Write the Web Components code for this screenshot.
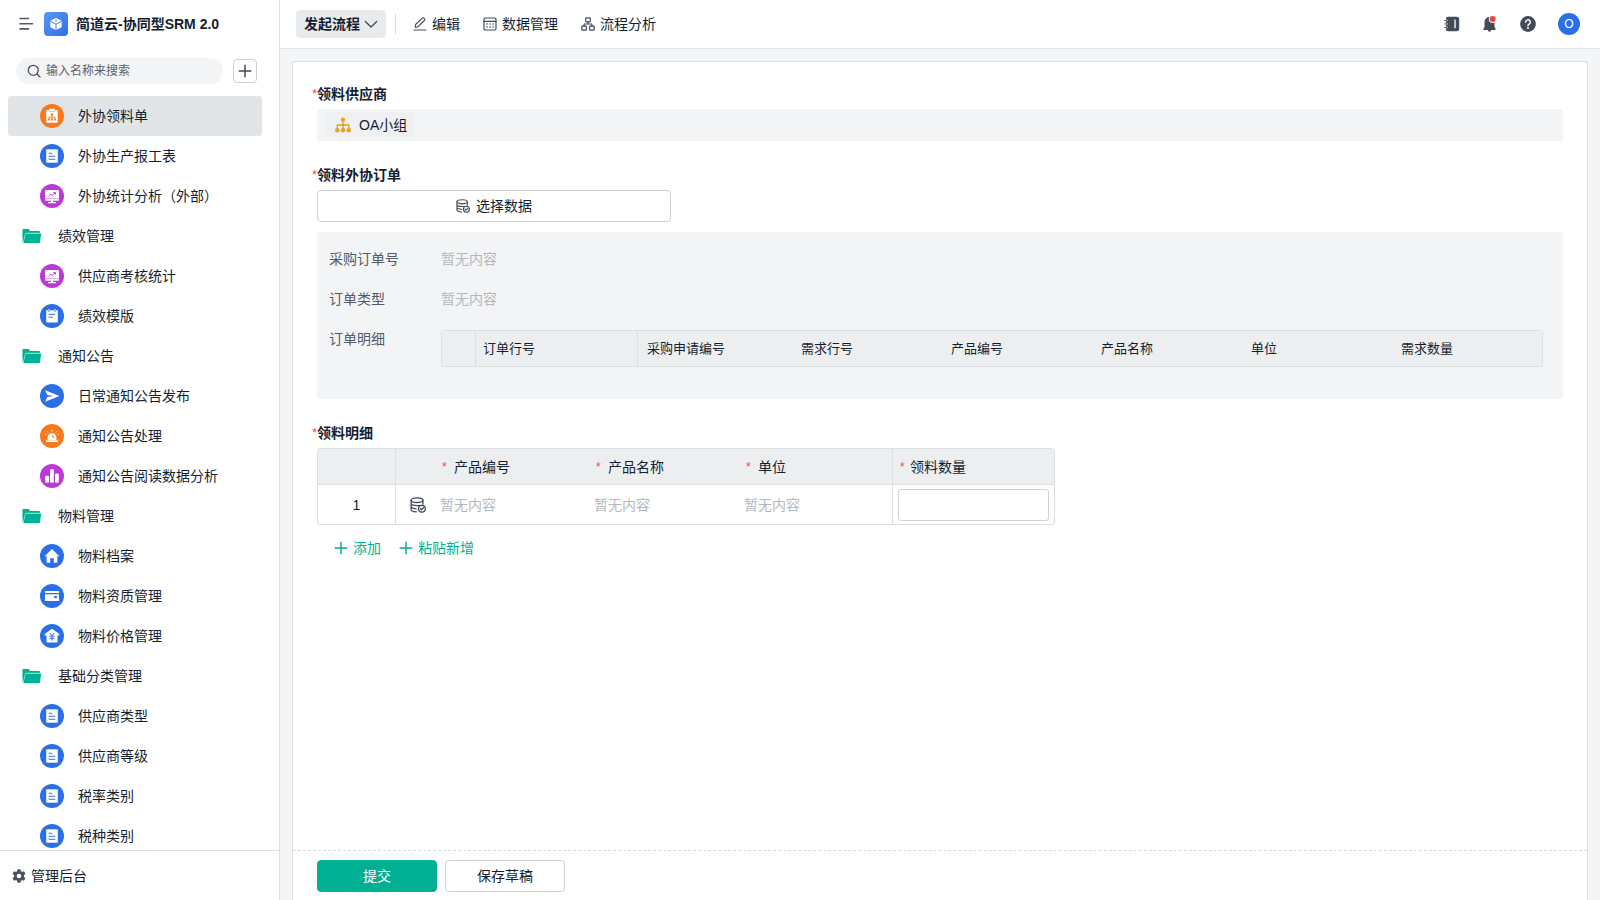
<!DOCTYPE html>
<html lang="zh-CN">
<head>
<meta charset="utf-8">
<meta name="viewport" content="width=device-width, initial-scale=1">
<title>简道云-协同型SRM 2.0</title>
<style>
:root {
  --ink: #141e31;
  --muted: #525967;
  --faint: #b4b8be;
  --line: #dcdfe2;
  --line-strong: #ced2d6;
  --page: #f3f5f6;
  --head: #eceeef;
  --brand: #00b092;
  --danger: #eb5050;
  --blue: #2a6fe8;
  --orange: #f8791c;
  --purple: #bb3ad6;
}
html, body { height: 100%; }
body {
  margin: 0;
  font: 14px/20px "Liberation Sans", "Noto Sans CJK SC", sans-serif;
  color: var(--ink);
  background: var(--page);
}
</style>
</head>
<body>
<srm-app></srm-app>

<template id="t-app">
  <style>
    :host { display: flex; height: 100vh; }
    srm-sidebar { flex: 0 0 279px; }
    .main { flex: 1; min-width: 0; display: flex; flex-direction: column; }
    srm-form { flex: 1; min-height: 0; margin: 12px 12px 0; }
  </style>
  <srm-sidebar></srm-sidebar>
  <div class="main">
    <srm-topbar></srm-topbar>
    <srm-form></srm-form>
  </div>
</template>

<template id="t-sidebar">
  <style>
    :host { display: flex; flex-direction: column; background: #fff; border-right: 1px solid var(--line); min-height: 0; }
    header { display: flex; align-items: center; height: 48px; padding: 0 16px; }
    button { font: inherit; color: inherit; cursor: pointer; padding: 0; }
    .menu { display: flex; width: 20px; height: 20px; border: 0; background: none; color: var(--muted); align-items: center; justify-content: center; }
    .logo { margin: 0 8px; }
    h1 { margin: 0; font-size: 14px; line-height: 20px; font-weight: 600; white-space: nowrap; }
    .tools { display: flex; align-items: center; gap: 10px; padding: 10px 22px 12px 16px; }
    label { flex: 1; min-width: 0; display: flex; align-items: center; gap: 5px; height: 26px; box-sizing: border-box; padding: 0 11px; border-radius: 13px; background: #f2f4f5; color: #434a58; }
    input { flex: 1; min-width: 0; border: 0; padding: 0; background: none; outline: 0; font: inherit; font-size: 12px; color: inherit; }
    input::placeholder { color: #5a606c; opacity: 1; }
    .add { display: flex; align-items: center; justify-content: center; width: 24px; height: 24px; box-sizing: border-box; border: 1px solid var(--line-strong); border-radius: 4px; background: #fff; color: #434a58; }
    nav { flex: 1; min-height: 0; overflow-y: auto; scrollbar-width: none; padding: 0 17px 0 8px; }
    footer { height: 49px; border-top: 1px solid var(--line); display: flex; align-items: center; padding-left: 12px; }
    footer a { display: flex; align-items: center; gap: 5px; color: inherit; text-decoration: none; }
    footer srm-icon { color: #4b5160; }
  </style>
  <header>
    <button class="menu" aria-label="收起菜单"><srm-icon name="menu" size="16"></srm-icon></button>
    <srm-icon class="logo" name="logo" size="24"></srm-icon>
    <h1>简道云-协同型SRM 2.0</h1>
  </header>
  <div class="tools">
    <label><srm-icon name="search" size="14"></srm-icon><input type="search" placeholder="输入名称来搜索" aria-label="输入名称来搜索"></label>
    <button class="add" aria-label="新建"><srm-icon name="plus" size="14"></srm-icon></button>
  </div>
  <nav>
    <nav-item icon="badge" tone="orange" active>外协领料单</nav-item>
    <nav-item icon="doc" tone="blue">外协生产报工表</nav-item>
    <nav-item icon="screen" tone="purple">外协统计分析（外部）</nav-item>
    <nav-item icon="folder">绩效管理</nav-item>
    <nav-item icon="screen" tone="purple">供应商考核统计</nav-item>
    <nav-item icon="note" tone="blue">绩效模版</nav-item>
    <nav-item icon="folder">通知公告</nav-item>
    <nav-item icon="send" tone="blue">日常通知公告发布</nav-item>
    <nav-item icon="alarm" tone="orange">通知公告处理</nav-item>
    <nav-item icon="bars" tone="purple">通知公告阅读数据分析</nav-item>
    <nav-item icon="folder">物料管理</nav-item>
    <nav-item icon="home" tone="blue">物料档案</nav-item>
    <nav-item icon="wallet" tone="blue">物料资质管理</nav-item>
    <nav-item icon="price" tone="blue">物料价格管理</nav-item>
    <nav-item icon="folder">基础分类管理</nav-item>
    <nav-item icon="doc" tone="blue">供应商类型</nav-item>
    <nav-item icon="doc" tone="blue">供应商等级</nav-item>
    <nav-item icon="doc" tone="blue">税率类别</nav-item>
    <nav-item icon="doc" tone="blue">税种类别</nav-item>
  </nav>
  <footer><a href="#admin"><srm-icon name="gear" size="14"></srm-icon>管理后台</a></footer>
</template>

<template id="t-nav-item">
  <style>
    :host { display: block; }
    a { display: flex; align-items: center; gap: 14px; height: 40px; padding-left: 32px; border-radius: 3px; color: inherit; text-decoration: none; white-space: nowrap; }
    .disc { display: flex; width: 24px; height: 24px; border-radius: 50%; color: #fff; }
    :host([tone=blue]) { --disc: var(--blue); }
    :host([tone=orange]) { --disc: var(--orange); }
    :host([tone=purple]) { --disc: var(--purple); }
    .disc { background: var(--disc); }
    :host([active]) a { background: #e1e5e8; }
    :host([icon=folder]) a { padding-left: 12px; }
    :host([icon=folder]) .disc { color: var(--brand); border-radius: 0; }
  </style>
  <a href="#"><span class="disc"><srm-icon size="24"></srm-icon></span><slot></slot></a>
</template>

<template id="t-topbar">
  <style>
    :host { display: flex; align-items: center; height: 48px; background: #fff; border-bottom: 1px solid #e4e7e9; padding: 0 20px 0 16px; }
    button { font: inherit; color: inherit; border: 0; background: none; padding: 0; cursor: pointer; }
    .start { display: flex; align-items: center; gap: 4px; height: 28px; padding: 0 8px; border-radius: 4px; background: #e8ebed; font-weight: 600; }
    .start srm-icon { color: #434a58; }
    .rule { width: 1px; height: 20px; background: #d5d8dc; margin: 0 17px 0 9px; }
    .tabs { display: flex; gap: 23px; flex: 1; }
    .tabs a { display: flex; align-items: center; gap: 5px; color: inherit; text-decoration: none; white-space: nowrap; }
    .tabs srm-icon, .actions { color: #434a58; }
    .actions { display: flex; align-items: center; gap: 22px; }
    .actions button { display: flex; }
    .actions .me { justify-content: center; width: 22px; height: 22px; border-radius: 50%; background: #2a6fe8; color: #fff; font-size: 12px; line-height: 22px; }
  </style>
  <button class="start">发起流程<srm-icon name="chevron" size="14"></srm-icon></button>
  <span class="rule"></span>
  <nav class="tabs">
    <a href="#edit"><srm-icon name="pencil" size="14"></srm-icon>编辑</a>
    <a href="#data"><srm-icon name="grid" size="14"></srm-icon>数据管理</a>
    <a href="#flow"><srm-icon name="flow" size="14"></srm-icon>流程分析</a>
  </nav>
  <div class="actions">
    <button aria-label="通讯录"><srm-icon name="book" size="16"></srm-icon></button>
    <button aria-label="消息"><srm-icon name="bell" size="16"></srm-icon></button>
    <button aria-label="帮助"><srm-icon name="help" size="16"></srm-icon></button>
    <button class="me">O</button>
  </div>
</template>

<template id="t-field">
  <style>
    :host { display: block; }
    h2 { position: relative; margin: 0 0 5px; font-size: 14px; line-height: 20px; font-weight: 600; }
    h2::before { content: "*"; position: absolute; right: 100%; color: var(--danger); font-size: 13px; font-weight: 400; }
  </style>
  <h2></h2>
  <slot></slot>
</template>

<template id="t-form">
  <style>
    :host { display: flex; flex-direction: column; background: #fff; border: 1px solid var(--line); border-bottom: 0; border-radius: 3px 3px 0 0; }
    .body { flex: 1; min-height: 0; overflow-y: auto; scrollbar-width: none; padding: 22px 24px; }
    form-field + form-field { margin-top: 24px; }
    button { font: inherit; color: inherit; cursor: pointer; }
    .members { display: flex; align-items: center; height: 32px; padding: 0 8px; border-radius: 2px; background: #f2f4f5; }
    .tag { display: flex; align-items: center; gap: 8px; height: 26px; padding: 0 8px 0 10px; border-radius: 3px; background: #eef0f1; }
    .tag srm-icon { color: #e5a01c; }
    .pick { display: flex; align-items: center; justify-content: center; gap: 6px; width: 354px; height: 32px; border: 1px solid var(--line-strong); border-radius: 4px; background: #fff; }
    .pick srm-icon, td srm-icon { color: #434a58; }
    dl { display: grid; grid-template-columns: 112px 1fr; row-gap: 20px; margin: 10px 0 0; padding: 17px 20px 32px 12px; border-radius: 4px; background: #f2f4f6; }
    dt { color: var(--muted); }
    dd { margin: 0; color: var(--faint); }
    table { border-collapse: separate; border-spacing: 0; table-layout: fixed; border: 1px solid var(--line); border-radius: 3px; color: var(--ink); }
    th { background: var(--head); font-weight: 400; text-align: left; white-space: nowrap; padding: 0; height: 35px; box-sizing: border-box; }
    .line { border-right: 1px solid var(--line); }
    .order { width: 100%; font-size: 13px; margin-top: 1px; }
    .order th { padding-left: 9px; }
    .order th.line { padding-left: 7px; }
    .items { width: 738px; }
    .items td { padding: 0; height: 40px; box-sizing: border-box; border-top: 1px solid var(--line); color: var(--faint); }
    .items td.no { color: var(--ink); text-align: center; }
    .items th.req::before { content: "*"; display: inline-block; width: 12px; color: var(--danger); font-size: 12px; vertical-align: top; }
    .items th.req { padding-left: 2px; }
    .items th.qty { padding-left: 7px; }
    .items th.qty::before { width: 10px; }
    td.icon srm-icon { margin: 0 auto; }
    td.edit { padding: 0 5px; }
    input { display: block; width: 100%; height: 32px; box-sizing: border-box; border: 1px solid var(--line-strong); border-radius: 3px; background: #fff; font: inherit; padding: 0 8px; }
    .more { display: flex; gap: 18px; padding: 13px 17px 0; }
    .more button { display: flex; align-items: center; gap: 5px; border: 0; padding: 0; background: none; color: var(--brand); }
    footer { display: flex; gap: 8px; height: 50px; box-sizing: border-box; border-top: 1px dashed #d8dcdf; padding: 9px 24px 0; }
    footer button { width: 120px; height: 32px; border: 1px solid var(--line-strong); border-radius: 4px; background: #fff; padding: 0; }
    footer .primary { border-color: var(--brand); background: var(--brand); color: #fff; }
  </style>
  <div class="body">
    <form-field caption="领料供应商">
      <div class="members"><span class="tag"><srm-icon name="org" size="16"></srm-icon>OA小组</span></div>
    </form-field>
    <form-field caption="领料外协订单">
      <button class="pick"><srm-icon name="database" size="14"></srm-icon>选择数据</button>
      <dl>
        <dt>采购订单号</dt><dd>暂无内容</dd>
        <dt>订单类型</dt><dd>暂无内容</dd>
        <dt>订单明细</dt>
        <dd>
          <table class="order">
            <colgroup><col style="width:34px"><col style="width:162px"><col style="width:154px"><col style="width:150px"><col style="width:150px"><col style="width:150px"><col style="width:150px"><col></colgroup>
            <thead><tr>
              <th class="line"></th><th class="line">订单行号</th><th>采购申请编号</th><th>需求行号</th><th>产品编号</th><th>产品名称</th><th>单位</th><th>需求数量</th>
            </tr></thead>
          </table>
        </dd>
      </dl>
    </form-field>
    <form-field caption="领料明细">
      <table class="items">
        <colgroup><col style="width:78px"><col style="width:44px"><col style="width:154px"><col style="width:150px"><col style="width:149px"><col></colgroup>
        <thead><tr>
          <th class="line"></th><th></th><th class="req">产品编号</th><th class="req">产品名称</th><th class="req line">单位</th><th class="req qty" id="qty">领料数量</th>
        </tr></thead>
        <tbody><tr>
          <td class="no line">1</td><td class="icon"><srm-icon name="database" size="16"></srm-icon></td><td>暂无内容</td><td>暂无内容</td><td class="line">暂无内容</td><td class="edit"><input type="text" inputmode="decimal" aria-labelledby="qty"></td>
        </tr></tbody>
      </table>
      <div class="more">
        <button><srm-icon name="plus" size="14"></srm-icon>添加</button>
        <button><srm-icon name="plus" size="14"></srm-icon>粘贴新增</button>
      </div>
    </form-field>
  </div>
  <footer><button class="primary">提交</button><button>保存草稿</button></footer>
</template>

<script>
const line = (box, body, w = 1.3) =>
  `<svg viewBox="0 0 ${box} ${box}" fill="none" stroke="currentColor" stroke-width="${w}" stroke-linecap="round" stroke-linejoin="round">${body}</svg>`;
const fill = (box, body) => `<svg viewBox="0 0 ${box} ${box}" fill="currentColor">${body}</svg>`;

/* Disc icons use a 24 unit box; cut-outs take the disc colour from --disc. */
const ICONS = {
  menu: line(16, '<path d="M2 2.500h8.500M2 7.700h12.500M2 12.900h8.500"/>', 1.6),
  logo: `<svg viewBox="0 0 24 24"><defs><linearGradient id="g" x1="0" y1="0" x2="1" y2="1"><stop offset="0" stop-color="#5c97f4"/><stop offset="1" stop-color="#2e6fe6"/></linearGradient></defs><rect width="24" height="24" rx="4" fill="url(#g)"/><path d="M12 6.500l5.200 2.500v6L12 17.700 6.800 15V9z" fill="#fff" stroke="#fff" stroke-linejoin="round"/><path d="M6.300 9.300l5.700 2.900 5.700-2.900M12 12.200v6" fill="none" stroke="#4580ec" stroke-width="1"/><circle cx="12" cy="8.900" r="1.300" fill="#a9c6fb"/></svg>`,
  search: line(14, '<circle cx="6.300" cy="6.300" r="5"/><path d="M10 10l3 3"/>', 1.3),
  plus: line(14, '<path d="M7 1.200v11.600M1.200 7h11.600"/>', 1.5),
  chevron: line(14, '<path d="M1.300 4.500L7 10l5.700-5.500"/>', 1.3),
  pencil: line(14, '<path d="M1 13h12M2.200 10.200l.4-2.700 6.800-6.300a1.200 1.200 0 0 1 1.700.1l.4.5a1.200 1.200 0 0 1-.1 1.700L4.800 9.900z"/>', 1.1),
  grid: line(14, '<rect x="1" y="1" width="12" height="12" rx="1.600"/><path d="M1 4.300h12"/><path d="M4 7h.1M7 7h.1M10 7h.1M4 10h.1M7 10h.1M10 10h.1" stroke-width="1.500"/>', 1.2),
  flow: line(14, '<rect x="4.700" y=".8" width="4.600" height="4" rx=".8"/><rect x=".8" y="9.200" width="4.600" height="4" rx=".8"/><rect x="8.600" y="9.200" width="4.600" height="4" rx=".8"/><path d="M7 4.800V7M3.100 9.200V7h7.800v2.200"/>', 1.2),
  book: `<svg viewBox="0 0 16 16" fill="currentColor"><rect x="1.800" y=".8" width="13.400" height="14.400" rx="2.200"/><rect x="10.200" y="3.600" width="1.700" height="8.600" rx=".5" fill="#d5d8dd"/><path d="M1 4.400h2.400M1 7.900h2.400M1 11.400h2.400" stroke="#fff" stroke-width="1.700"/><path d="M.3 4.400h2.700M.3 7.900h2.700M.3 11.400h2.700" stroke="currentColor" stroke-width="1"/></svg>`,
  bell: fill(16, '<path d="M7.500 1a5 5 0 0 0-5 5v5L1.500 12.600v1.400h12v-1.400l-1-1.600V6a5 5 0 0 0-5-5zM5.800 14h3.400a1.700 1.700 0 0 1-3.400 0z"/><circle cx="10.700" cy="3" r="3.900" fill="#fff"/><circle cx="10.700" cy="3" r="3" fill="#ea4545"/>'),
  help: fill(16, '<circle cx="8" cy="8" r="7.900"/><path d="M5.700 6.200a2.300 2.300 0 1 1 3.500 1.900c-.8.5-1.200.8-1.200 1.700" fill="none" stroke="#fff" stroke-width="1.500" stroke-linecap="round"/><circle cx="8" cy="12" r="1" fill="#fff"/>'),
  gear: fill(14, '<path fill-rule="evenodd" d="M5.500.3h3l.4 1.900 1.200.7 1.900-.7 1.500 2.600-1.500 1.300v1.800l1.500 1.300-1.500 2.600-1.900-.7-1.200.7-.4 1.900h-3l-.4-1.900-1.200-.7-1.900.7L.5 9.200 2 7.900V6.100L.5 4.800 2 2.200l1.900.7 1.200-.7zM7 4.700a2.300 2.300 0 1 0 0 4.600 2.300 2.300 0 0 0 0-4.600z"/>'),
  org: `<svg viewBox="0 0 16 16" fill="currentColor"><path d="M8 3v9.500M2.300 12.500V8h11.400v4.500" fill="none" stroke="currentColor" stroke-width="1.400"/><circle cx="8" cy="2.600" r="2.200"/><circle cx="2.300" cy="13.200" r="2.200"/><circle cx="8" cy="13.200" r="2.200"/><circle cx="13.700" cy="13.200" r="2.200"/></svg>`,
  database: line(16, '<ellipse cx="7" cy="3.200" rx="5.900" ry="2.300"/><path d="M1.100 3.200v9.300c0 1.300 2 2.200 5.200 2.300M12.900 3.200v4M1.100 6.300c0 1.300 2.700 2.300 5.900 2.300 1 0 1.800-.1 2.500-.3M1.100 9.500c0 1.200 2 2.100 5 2.300"/><circle cx="11.900" cy="11.700" r="3.400"/><path d="M10.400 11.700l1.100 1.100 2-2"/>', 1.3),
  folder: `<svg viewBox="0 0 24 24"><path d="M2.500 18V6.200c0-.7.500-1.200 1.200-1.200h4.600l2 2.100h8.500c.7 0 1.200.5 1.200 1.200V10z" fill="currentColor"/><path d="M5.700 9.300h15.600L19.800 19H3.200z" fill="currentColor" stroke="#9fe9dc" stroke-width="1"/><path d="M5.700 10h15.200l-1.300 9H3.800z" fill="currentColor"/></svg>`,
  doc: fill(24, '<path d="M6.200 5.300h11.600v13.400H6.200z"/><path d="M8.700 9.200h3.300M8.700 12.200h6.600M8.700 15.200h6.600" stroke="var(--disc)" stroke-width="1.100"/>'),
  note: fill(24, '<path d="M6.200 6.300h11.600v12.200H6.200z"/><path d="M9 5.500v2M15 5.500v2" stroke="var(--disc)" stroke-width="2"/><path d="M9 5v2.300M15 5v2.300" stroke="currentColor" stroke-width="1"/><path d="M8.600 10.300h6.600M8.600 13.200h4" stroke="var(--disc)" stroke-width="1.100"/>'),
  badge: fill(24, '<path d="M6.200 6h11.600v12.700H6.200z"/><rect x="9" y="4.600" width="6" height="3" rx=".5" stroke="var(--disc)" stroke-width=".5"/><circle cx="12" cy="10.400" r="1.200" fill="var(--disc)"/><path d="M12 10v5M9 15v-2h6v2" fill="none" stroke="var(--disc)" stroke-width=".8"/><path d="M8.100 14.600h1.800v1.800H8.100zM11.100 14.600h1.800v1.800h-1.800zM14.100 14.600h1.800v1.800h-1.800z" fill="var(--disc)"/>'),
  screen: fill(24, '<rect x="5" y="6" width="14" height="10.700" rx="1"/><path d="M11 16.500h2v2h-2zM8 18h8v1.200H8z"/><path d="M5 14.700h14" stroke="var(--disc)" stroke-width=".5"/><path d="M8.500 12l2.200-1.800 1.800 1.200 2.500-2.600M13.400 8.500h2v2" fill="none" stroke="var(--disc)" stroke-width="1"/>'),
  send: fill(24, '<path d="M5.200 6.300L19.500 12 5.200 17.700 7.200 13.100 13.500 12 7.200 10.900z"/>'),
  alarm: fill(24, '<path d="M7.600 16v-2.400a4.400 4.400 0 0 1 8.800 0V16zM6 16.300h12V18H6z"/><path d="M12 5.500v1.800M7.200 7.300l.9 1.200M16.800 7.300l-.9 1.200M5.400 10.200l1.200.5M18.600 10.200l-1.200.5" stroke="currentColor" stroke-width=".9"/><path d="M12 11.500l2 2.700" fill="none" stroke="var(--disc)" stroke-width="1.100"/>'),
  bars: fill(24, '<rect x="5.200" y="11.700" width="3.800" height="7" rx="1"/><rect x="10.100" y="5.300" width="3.800" height="13.400" rx="1"/><rect x="15" y="9.400" width="3.800" height="9.300" rx="1"/>'),
  home: fill(24, '<path d="M12 4.900l7.300 7.300h-1.900v6.600h-3.600v-4.600h-3.600v4.600H6.600v-6.600H4.700z"/>'),
  wallet: fill(24, '<path d="M5 7h14v2H5zM5 10.200h14V17H5z"/><rect x="14.200" y="12" width="2.600" height="2.200" fill="var(--disc)"/>'),
  price: fill(24, '<path d="M12 4.700l7.300 5.200v1.500h-1.800v7.200h-11v-7.200H4.700V9.900z"/><path d="M9.800 9l2.200 2.900L14.200 9M12 11.900v4.700M9.500 12.200h5M9.500 14.300h5" fill="none" stroke="var(--disc)" stroke-width="1"/>')
};

class SrmIcon extends HTMLElement {
  static observedAttributes = ["name", "size"];
  constructor() { super(); this.attachShadow({ mode: "open" }); }
  connectedCallback() { this.render(); }
  attributeChangedCallback() { this.render(); }
  render() {
    const size = Number(this.getAttribute("size")) || 16;
    this.shadowRoot.innerHTML =
      `<style>:host{display:block;flex:none;width:${size}px;height:${size}px}svg{display:block;width:100%;height:100%}</style>` +
      (ICONS[this.getAttribute("name")] || "");
  }
}
customElements.define("srm-icon", SrmIcon);

class TemplateElement extends HTMLElement {
  constructor() {
    super();
    const template = document.getElementById(this.constructor.template);
    this.attachShadow({ mode: "open" }).append(document.importNode(template.content, true));
  }
}

customElements.define("nav-item", class extends TemplateElement {
  static template = "t-nav-item";
  connectedCallback() {
    this.shadowRoot.querySelector("srm-icon").setAttribute("name", this.getAttribute("icon"));
    if (this.hasAttribute("active")) this.shadowRoot.querySelector("a").setAttribute("aria-current", "page");
  }
});
customElements.define("form-field", class extends TemplateElement {
  static template = "t-field";
  connectedCallback() { this.shadowRoot.querySelector("h2").textContent = this.getAttribute("caption"); }
});
customElements.define("srm-sidebar", class extends TemplateElement { static template = "t-sidebar"; });
customElements.define("srm-topbar", class extends TemplateElement { static template = "t-topbar"; });
customElements.define("srm-form", class extends TemplateElement { static template = "t-form"; });
customElements.define("srm-app", class extends TemplateElement { static template = "t-app"; });
</script>
</body>
</html>
